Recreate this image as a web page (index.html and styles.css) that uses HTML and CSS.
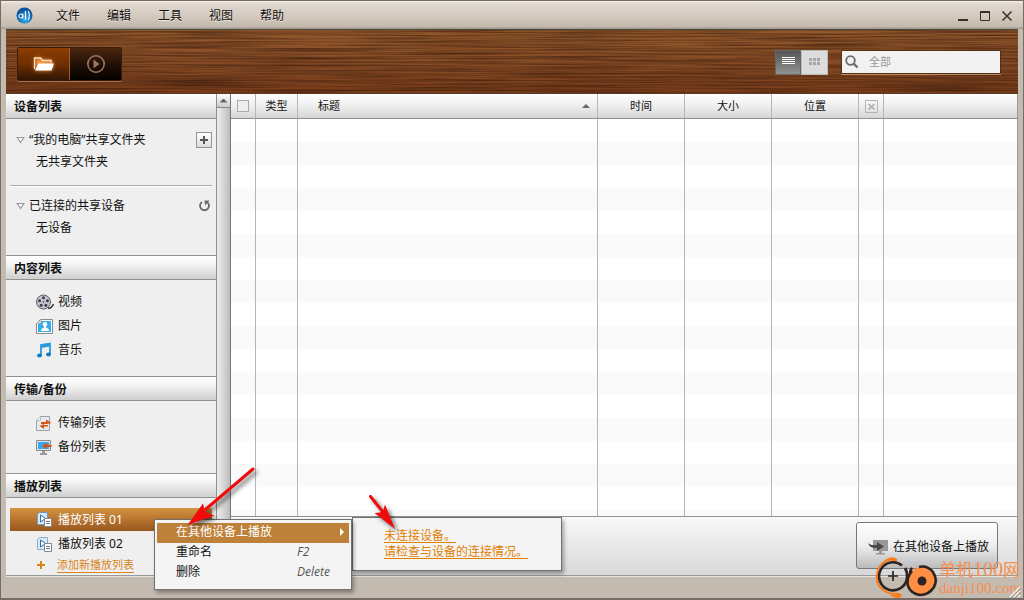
FILE: index.html
```html
<!DOCTYPE html>
<html lang="zh-CN">
<head>
<meta charset="utf-8">
<title>AllShare</title>
<link rel="stylesheet" href="styles.css">
</head>
<body>
<div class="window">
  <header class="titlebar">
    <svg class="logo" width="17" height="17" viewBox="0 0 17 17"><defs><radialGradient id="lg" cx=".55" cy=".75" r=".7"><stop offset="0" stop-color="#35b8f0"/><stop offset=".6" stop-color="#1268b4"/><stop offset="1" stop-color="#0d4f9a"/></radialGradient></defs><circle cx="8.500" cy="8.500" r="8" fill="url(#lg)"/><path d="M6.800 6.500v5M12.300 4q2 4.500 0 9" stroke="#fff" stroke-width="1.100" fill="none"/><circle cx="4.800" cy="9" r="2" stroke="#fff" fill="none"/><path d="M9.500 4v8.500" stroke="#fff" stroke-width="1.300"/></svg>
    <nav class="menubar"><button>文件</button><button>编辑</button><button>工具</button><button>视图</button><button>帮助</button></nav>
    <div class="controls">
      <button aria-label="最小化"><svg width="12" height="12"><path d="M1 10h10" stroke="#3a302b" stroke-width="2"/></svg></button>
      <button aria-label="最大化"><svg width="12" height="12"><path d="M1.500 2v8.500h9V2" stroke="#3a302b" fill="none"/><path d="M1 2h10" stroke="#3a302b" stroke-width="2"/></svg></button>
      <button aria-label="关闭"><svg width="12" height="12"><path d="M1.500 1.500l9 9M10.500 1.500l-9 9" stroke="#3a302b" stroke-width="1.500"/></svg></button>
    </div>
  </header>
  <div class="frame">
    <div class="toolbar">
      <svg class="wood" width="100%" height="100%"><filter id="grain" x="0" y="0" width="100%" height="100%" color-interpolation-filters="sRGB"><feTurbulence type="fractalNoise" baseFrequency="0.008 0.6" numOctaves="3" seed="11"/><feColorMatrix values="0 0 0 0 .22  0 0 0 0 .1  0 0 0 0 .04  1.300 0 0 0 -.4"/></filter><rect width="100%" height="100%" filter="url(#grain)"/></svg>
      <div class="modes">
        <button class="mode on" aria-label="文件夹"><svg width="30" height="24" viewBox="0 0 30 24"><path class="glow" d="M6 17.500V6h6l2 2h8.500v3.500H25l-3 7H6z" fill="#ff9d4a"/><path d="M5.500 17V6h6l2 2.500H22V11" stroke="#ffe2c4" stroke-width="1.300" fill="none"/><path d="M9.500 11.500H25L22.500 18.500H6z" fill="#fff"/></svg></button>
        <button class="mode" aria-label="播放"><svg width="20" height="20" viewBox="0 0 20 20"><circle cx="10" cy="10" r="8.200" stroke="#9c7763" stroke-width="1.600" fill="none"/><path d="M7.500 5.500v9l6-4.500z" fill="#9c7763"/></svg></button>
      </div>
      <div class="views">
        <button class="view on" aria-label="列表视图"><svg width="13" height="10"><path d="M0 .5h13M0 2.500h13M0 4.500h13M0 6.500h13" stroke="#fff"/></svg></button>
        <button class="view" aria-label="图标视图"><svg width="12" height="8" fill="#a6a6a6"><path d="M0 0h3v3H0zM4 0h3v3H4zM8 0h3v3H8zM0 4h3v3H0zM4 4h3v3H4zM8 4h3v3H8z"/></svg></button>
      </div>
      <label class="search"><svg width="14" height="14" viewBox="0 0 14 14" fill="none" stroke="#6b6b6b"><circle cx="5.500" cy="5.500" r="4.300" stroke-width="1.800"/><path d="M8.500 8.500l4 4" stroke-width="2.400"/></svg><input type="text" placeholder="全部" aria-label="搜索"></label>
    </div>
    <div class="content">
      <aside class="sidebar">
        <h2>设备列表</h2>
        <section class="devices">
          <div class="row"><svg width="9" height="8"><path d="M1.200 1.500h6.600L4.500 6.500z" fill="#fff" stroke="#999" stroke-width="1.200"/></svg><span>“我的电脑”共享文件夹</span><button class="add" aria-label="添加文件夹"><svg width="14" height="14"><path d="M7 3v8M3 7h8" stroke="#555" stroke-width="2"/></svg></button></div>
          <p>无共享文件夹</p>
          <hr>
          <div class="row"><svg width="9" height="8"><path d="M1.200 1.500h6.600L4.500 6.500z" fill="#fff" stroke="#999" stroke-width="1.200"/></svg><span>已连接的共享设备</span><button class="refresh" aria-label="刷新"><svg width="16" height="14" fill="none" stroke="#696969"><path d="M6 3a4.500 4.500 0 1 0 5 0" stroke-width="1.800"/><path d="M8.500 1.500h5L9 6.500z" fill="#696969" stroke="none"/></svg></button></div>
          <p>无设备</p>
        </section>
        <h2 class="line">内容列表</h2>
        <section class="library">
          <a href="#"><svg width="18" height="17" viewBox="0 0 18 17"><circle cx="7.500" cy="8" r="7" fill="#c6c4d2" stroke="#5c5b64"/><path d="M12 14q3 1 5.500-4" stroke="#333" stroke-width="1.500" fill="none"/><g fill="#3d3c45"><circle cx="7.500" cy="3.800" r="1.500"/><circle cx="11.400" cy="6.700" r="1.500"/><circle cx="9.900" cy="11.300" r="1.500"/><circle cx="5.100" cy="11.300" r="1.500"/><circle cx="3.600" cy="6.700" r="1.500"/></g><circle cx="7.500" cy="8" r=".8" fill="#333"/></svg>视频</a>
          <a href="#"><svg width="18" height="17" viewBox="0 0 18 17"><path d="M4.500 1.500h12v14H.5v-10z" fill="#fff" stroke="#868b90"/><path d="M5 3h10v11H2V6z" fill="#35acec"/><path d="M5 1.500v4H.5z" fill="#ddd" stroke="#999" stroke-width=".5"/><circle cx="9" cy="6.300" r="2.300" fill="#fff"/><path d="M5 13q0-3 3-3.500V8h2v1.500q3 .5 3 3.500z" fill="#fff"/></svg>图片</a>
          <a href="#"><svg width="18" height="17" viewBox="0 0 18 17"><path d="M5 13.500V3l9-1.500V12M5 5L14 3.500" stroke="#2b9bdc" stroke-width="1.800" fill="none"/><ellipse cx="3.500" cy="13.500" rx="2.500" ry="2" fill="#137bc1"/><ellipse cx="12.500" cy="12.500" rx="2.500" ry="2" fill="#137bc1"/></svg>音乐</a>
        </section>
        <h2 class="line">传输/备份</h2>
        <section class="transfer">
          <a href="#"><svg width="18" height="17" viewBox="0 0 18 17"><path d="M4.500 1.500h9v14H.5v-10z" fill="#e6e9ef" stroke="#98a0ac"/><path d="M4.500 1.500v4h-4z" fill="#fff" stroke="#a4abb5" stroke-width=".7"/><path d="M5 7h5V4.500L15.500 8 11 9H5zM12 10v1.500H8V14L3.500 11 8 9v1z" fill="#d65310"/></svg>传输列表</a>
          <a href="#"><svg width="18" height="17" viewBox="0 0 18 17"><path d="M.5 1.500h14v10H.5z" fill="#e0e2e5" stroke="#8a8a8a"/><path d="M2 3h11v7H2z" fill="#35aaf0"/><path d="M6 12h3v2h2v2H4v-2h2z" fill="#9a9da0"/><path d="M15.500 5.800H10.500V3.500L6 7l4.500 3V8h5z" fill="#d65310"/></svg>备份列表</a>
        </section>
        <h2 class="line">播放列表</h2>
        <section class="playlists">
          <a href="#" class="sel"><svg width="18" height="17" viewBox="0 0 18 17"><path d="M3.500 1.500h8v12h-10V3.500z" fill="#d9e9f7" stroke="#6d9cc6"/><path d="M4.500 4v7L9.500 7.500z" fill="#fff" stroke="#2870a8"/><path d="M8.500 7.500h7v8h-7z" fill="#fff" stroke="#808890"/><path d="M10 10.500h4M10 12.500h4" stroke="#777"/></svg>播放列表 01</a>
          <a href="#"><svg width="18" height="17" viewBox="0 0 18 17"><path d="M3.500 1.500h8v12h-10V3.500z" fill="#d9e9f7" stroke="#8dabc9"/><path d="M4.500 4v7L9.500 7.500z" fill="#fff" stroke="#2870a8"/><path d="M8.500 7.500h7v8h-7z" fill="#fff" stroke="#808890"/><path d="M10 10.500h4M10 12.500h4" stroke="#777"/></svg>播放列表 02</a>
          <a href="#" class="new"><svg width="10" height="10"><path d="M5 1v8M1 5h8" stroke="#d9831a" stroke-width="2"/></svg><span>添加新播放列表</span></a>
        </section>
      </aside>
      <div class="scroll"><button aria-label="向上滚动"><i class="up"></i></button><div class="thumb"></div></div>
      <main class="main">
        <div class="listing">
          <table>
            <colgroup><col class="c-check"><col class="c-type"><col class="c-title"><col class="c-info"><col class="c-info"><col class="c-info"><col class="c-check"><col></colgroup>
            <thead><tr><th><input type="checkbox" aria-label="全选"></th><th>类型</th><th class="title"><div>标题<i class="up"></i></div></th><th>时间</th><th>大小</th><th>位置</th><th><button class="del" aria-label="删除"><svg width="13" height="13"><path d="M.5.5h12v12H.5z" fill="none" stroke="#b4b4b4"/><path d="M3.500 4l6 5.500M9.500 4l-6 5.500" stroke="#aaa" stroke-width="1.500"/></svg></button></th><th></th></tr></thead>
            <tbody>
              <tr><td></td><td></td><td></td><td></td><td></td><td></td><td></td><td></td></tr>
              <tr><td></td><td></td><td></td><td></td><td></td><td></td><td></td><td></td></tr>
              <tr><td></td><td></td><td></td><td></td><td></td><td></td><td></td><td></td></tr>
              <tr><td></td><td></td><td></td><td></td><td></td><td></td><td></td><td></td></tr>
              <tr><td></td><td></td><td></td><td></td><td></td><td></td><td></td><td></td></tr>
              <tr><td></td><td></td><td></td><td></td><td></td><td></td><td></td><td></td></tr>
              <tr><td></td><td></td><td></td><td></td><td></td><td></td><td></td><td></td></tr>
              <tr><td></td><td></td><td></td><td></td><td></td><td></td><td></td><td></td></tr>
              <tr><td></td><td></td><td></td><td></td><td></td><td></td><td></td><td></td></tr>
              <tr><td></td><td></td><td></td><td></td><td></td><td></td><td></td><td></td></tr>
              <tr><td></td><td></td><td></td><td></td><td></td><td></td><td></td><td></td></tr>
              <tr><td></td><td></td><td></td><td></td><td></td><td></td><td></td><td></td></tr>
              <tr><td></td><td></td><td></td><td></td><td></td><td></td><td></td><td></td></tr>
              <tr><td></td><td></td><td></td><td></td><td></td><td></td><td></td><td></td></tr>
              <tr><td></td><td></td><td></td><td></td><td></td><td></td><td></td><td></td></tr>
              <tr><td></td><td></td><td></td><td></td><td></td><td></td><td></td><td></td></tr>
              <tr><td></td><td></td><td></td><td></td><td></td><td></td><td></td><td></td></tr>
              <tr><td></td><td></td><td></td><td></td><td></td><td></td><td></td><td></td></tr>
            </tbody>
          </table>
        </div>
        <footer class="actions"><button class="play"><svg width="22" height="16" viewBox="0 0 22 16"><path d="M6 1h15v11h-6v2h3v1.500H9V14h3v-2H6z" fill="#999"/><path d="M1 3.500q1 3 9 2.500V3l7 4.500-7 4.500V9Q2 9.500 1 3.500z" fill="#4a4a4a"/></svg>在其他设备上播放</button></footer>
      </main>
    </div>
  </div>
  <div class="menu submenu"><a href="#">未连接设备。</a><a href="#">请检查与设备的连接情况。</a></div>
  <div class="menu context">
    <button class="hot"><span>在其他设备上播放</span><i class="right"></i></button>
    <button><span>重命名</span><kbd>F2</kbd></button>
    <button><span>删除</span><kbd>Delete</kbd></button>
  </div>
  <svg class="arrow first" width="80" height="70" viewBox="0 0 80 70"><path d="M71 6L24 46" stroke="#f00c0c" stroke-width="3" stroke-linecap="round"/><path d="M5.500 62L21 40.500l1.500 6.500 3.500 3.500 6.500 2z" fill="#f00c0c"/></svg>
  <svg class="arrow second" width="40" height="50" viewBox="0 0 40 50"><path d="M5.500 5.500L18 21" stroke="#f00c0c" stroke-width="3" stroke-linecap="round"/><path d="M30 38L9.500 22l5.500-.500 3.500-3L20 13.500z" fill="#f00c0c"/></svg>
  <div class="watermark">
    <svg width="64" height="42" viewBox="0 0 64 42" fill="none"><path d="M21 4.500Q12 1 5 10-1 20 4 30q7 9 21 8" stroke="#ff7a16" stroke-width="2"/><path d="M10 4Q17-1 22 3v2.500q-5-2-12 0zM14 37q6 4 13 1l-1 3q-7 3-12-4z" fill="#ff7a16"/><path d="M27 9.500A14 14 0 1 0 32 22q1-5-2-10" stroke="#2c2322" stroke-width="2.600"/><path d="M13 20h10M18 15v10" stroke="#2c2322" stroke-width="1.700"/><circle cx="47" cy="25" r="14" fill="#ff8d42"/><path d="M44 11q8-2 14 5 5 8 1 15-5 8-14 8-9-1-12-9-2-8 4-15M35 18q0-4 2-6" stroke="#2c2322" stroke-width="2.600"/><circle cx="47" cy="25" r="4.500" fill="#2c2322"/></svg>
    <div class="brand"><strong>单机<span>100</span>网</strong><small>danji100.com</small></div>
  </div>
  <svg class="grip" width="12" height="12"><path d="M1 11L11 1M5 11l6-6M9 11l2-2" stroke="#f1ede7" stroke-width="1.500"/><path d="M2 12L12 2M6 12l6-6" stroke="#918880"/></svg>
</div>
</body>
</html>
```
FILE: styles.css
```css
* { box-sizing: border-box; }
body, h2, p { margin: 0; }
body, button, input { font: 12px/18px "Noto Sans", "Noto Sans CJK SC", sans-serif; color: #111; }
button { padding: 0; border: 0; background: none; }
a { color: inherit; text-decoration: none; }
svg { display: block; flex: none; }

.window { position: relative; display: flex; flex-direction: column; height: 100vh; overflow: hidden; background: #c4bbb0; border: 1px solid #776c65; border-bottom: 2px solid #776c65; }
.titlebar { flex: none; display: flex; align-items: center; height: 28px; padding: 0 10px 0 15px; background: linear-gradient(#f4edea 0, #dfd6cd 3px, #d5cbc1 50%, #c2b8ab 26px, #a39a90 27px); }
.menubar { display: flex; gap: 27px; margin-left: 23px; padding-top: 2px; }
.menubar button { text-shadow: 0 1px #eee6dd; }
.controls { display: flex; gap: 10px; margin-left: auto; padding-top: 2px; }

.frame { flex: 1; min-height: 0; display: flex; flex-direction: column; margin: 0 5px 22px; border-bottom: 1px solid #999; box-shadow: 0 1px #e8e4de; }
.toolbar { position: relative; flex: none; display: flex; align-items: center; height: 65px; padding: 4px 17px 0 11px; border-top: 1px solid #4b4a3e; border-bottom: 1px solid #5a3823; background: linear-gradient(#93592c, #884d26 50%, #783c1a); }
.wood { position: absolute; inset: 0; }
.modes { position: relative; display: flex; height: 34px; border: 1px solid #3b1b0b; border-radius: 2px; box-shadow: 0 1px #a5714c; }
.mode { display: flex; align-items: center; justify-content: center; width: 51px; background: linear-gradient(#4a260f, #1b0d05 60%, #050200); }
.mode.on { width: 52px; background: linear-gradient(#8b3d02, #702f02 50%, #2e1605); border-right: 1px solid #a45d2b; }
.glow { filter: blur(2px); }
.views { position: relative; display: flex; height: 25px; margin: 0 0 3px auto; }
.view { display: flex; align-items: center; justify-content: center; width: 27px; background: #dcdcdc; border: 1px solid #b9b9b9; }
.view.on { width: 26px; background: linear-gradient(#555, #929292); border-color: #666; }
.search { position: relative; display: flex; align-items: center; gap: 10px; width: 160px; height: 24px; margin: 0 0 4px 13px; padding: 0 4px 0 3px; background: #f2f2f2; border: 1px solid #54300f; box-shadow: 0 1px #b98e6d; }
.search input { flex: 1; min-width: 0; padding: 0; border: 0; outline: 0; background: none; font-size: 11px; }
.search input::placeholder { color: #999; opacity: 1; }

.content { flex: 1; min-height: 0; display: flex; border-right: 1px solid #999; }
.sidebar { flex: none; width: 211px; overflow: hidden; background: #efefef; border-right: 1px solid #8f8f8f; }
.sidebar h2 { height: 25px; padding: 3px 8px 0; font-size: 12px; line-height: 20px; font-weight: 600; background: linear-gradient(#fff, #f2f2f2 40%, #cfcfcf); border-bottom: 1px solid #919191; }
.sidebar h2.line { border-top: 1px solid #919191; }
.devices { height: 136px; padding: 10px 4px 0; }
.row { display: flex; align-items: center; height: 22px; padding-left: 6px; }
.row span { margin-left: 4px; }
.row button { margin-left: auto; }
.add { width: 16px; height: 16px; border: 1px solid #929292; background: linear-gradient(#fff, #ddd); }
.refresh { width: 16px; height: 14px; }
.devices p { padding: 2px 26px; line-height: 18px; }
.devices hr { height: 2px; margin: 12px 0 8px; border: 0; border-top: 1px solid #aaa; background: #fff; }
.library a, .transfer a, .playlists a { display: flex; align-items: center; gap: 4px; height: 24px; padding-left: 30px; }
.library { height: 96px; padding-top: 10px; }
.transfer { height: 72px; padding-top: 10px; }
.playlists { padding: 10px 4px; }
.playlists a { padding-left: 26px; }
.playlists a.sel { height: 23px; margin-bottom: 1px; color: #fff; background: linear-gradient(#d19342, #b8742f 50%, #96581d); }
.playlists a.new { height: 18px; gap: 11px; font-size: 11px; color: #d9831a; }
.playlists a.new span { border-bottom: 1px solid; line-height: 14px; }
.scroll { flex: none; width: 14px; background: #ccc; border-right: 1px solid #777; }
.scroll button { display: flex; align-items: center; justify-content: center; width: 13px; height: 14px; background: linear-gradient(#fff, #ccc); border-bottom: 1px solid #888; }
.thumb { height: 100%; background: linear-gradient(90deg, #eee, #ccc 70%, #bbb); }
.up { width: 8px; height: 4px; background: #666; clip-path: polygon(50% 0, 100% 100%, 0 100%); }

.main { flex: 1; min-width: 0; display: flex; flex-direction: column; }
.listing { flex: 1; min-height: 0; overflow: hidden; background: #fff; }
table { width: 100%; border-collapse: separate; border-spacing: 0; table-layout: fixed; }
.c-check { width: 25px; }
.c-type { width: 42px; }
.c-title { width: 300px; }
.c-info { width: 87px; }
th, td { padding: 0; border-right: 1px solid #b5b5b5; }
th:last-child, td:last-child { border-right: 0; }
th { height: 25px; font-size: 11px; font-weight: 400; line-height: 18px; background: linear-gradient(#fff, #eee 50%, #d6d6d6); border-bottom: 1px solid #919191; }
th input { display: block; appearance: none; width: 12px; height: 12px; margin: 0 auto; border: 1px solid #aaa; background: #eee; }
.title div { display: flex; align-items: center; justify-content: space-between; padding: 0 7px 0 20px; }
.del { display: block; margin: 0 auto; }
td { height: 23px; }
tbody tr:nth-child(even) { background: #fafafa; }
.actions { flex: none; display: flex; align-items: flex-start; justify-content: flex-end; height: 59px; padding: 5px 19px; background: linear-gradient(#f8f8f8, #d8d8d8); border-top: 1px solid #919191; }
.play { display: flex; align-items: center; gap: 4px; height: 47px; padding: 2px 8px 0 10px; border: 1px solid #777; border-radius: 3px; background: linear-gradient(#fff, #eee 50%, #bbb); }

.menu { position: absolute; background: #f4f4f4; border: 1px solid #707070; box-shadow: 2px 3px 4px #0005; }
.context { left: 153px; top: 518px; width: 198px; height: 71px; padding: 3px 2px; }
.context button { display: flex; align-items: center; justify-content: space-between; width: 100%; height: 20px; padding: 0 5px 2px 19px; }
.context .hot { color: #fff; background: #bd8139; }
.context kbd { width: 47px; font: italic 12px/18px "Open Sans", sans-serif; color: #555; text-align: left; }
.right { width: 4px; height: 8px; background: #fff; clip-path: polygon(0 0, 100% 50%, 0 100%); }
.submenu { left: 351px; top: 516px; width: 210px; height: 54px; padding: 10px 31px; color: #e08000; }
.submenu a { display: block; width: max-content; height: 16px; line-height: 16px; text-decoration: underline; text-underline-offset: 2px; }
.arrow { position: absolute; overflow: visible; filter: drop-shadow(3px 3px 2px #0008); }
.first { left: 181px; top: 462px; }
.second { left: 364px; top: 490px; }
.watermark { position: absolute; right: 0; bottom: 0; display: flex; align-items: flex-end; color: #f68f4f; }
.brand { display: flex; flex-direction: column; height: 39px; width: 84px; white-space: nowrap; }
.brand strong { font: 400 17px/20px "Noto Sans CJK SC", sans-serif; }
.brand strong span { font: 20px/20px "Liberation Serif", serif; }
.brand small { font: 15px/18px "Liberation Serif", serif; }
.grip { position: absolute; right: 2px; bottom: 0; }
```
